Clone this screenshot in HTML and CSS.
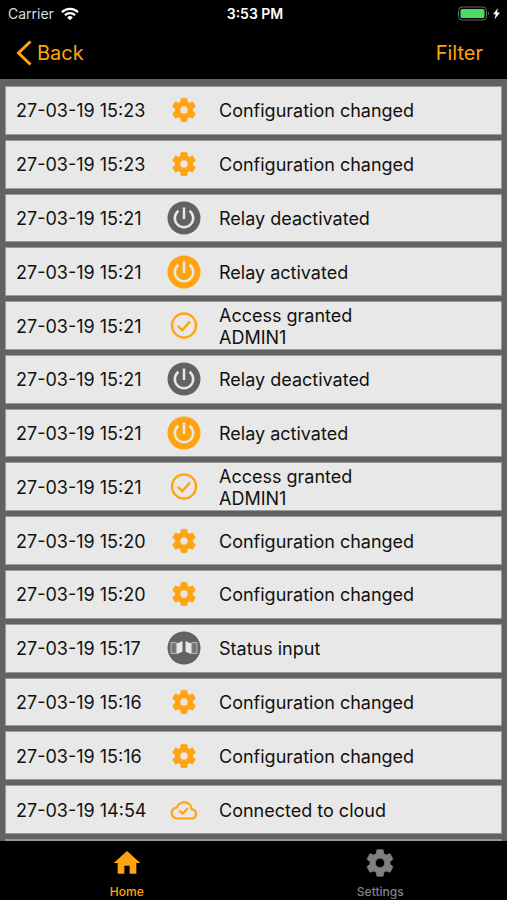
FILE: index.html
```
<!DOCTYPE html>
<html lang="en">
<head>
<meta charset="utf-8">
<meta name="viewport" content="width=device-width, initial-scale=1">
<title>Event log</title>
<link rel="stylesheet" href="styles.css">
</head>
<body>
<svg class="sprite" aria-hidden="true">
  <symbol id="gear" viewBox="0 0 24 24"><path fill="currentColor" stroke="currentColor" stroke-width=".5" stroke-linejoin="round" d="M19.43 12.98c.04-.32.07-.64.07-.98s-.03-.66-.07-.98l2.11-1.65c.19-.15.24-.42.12-.64l-2-3.46c-.12-.22-.39-.3-.61-.22l-2.49 1c-.52-.4-1.08-.73-1.69-.98l-.38-2.65C14.46 2.18 14.25 2 14 2h-4c-.25 0-.46.18-.49.42l-.38 2.65c-.61.25-1.17.59-1.69.98l-2.49-1c-.23-.09-.49 0-.61.22l-2 3.46c-.13.22-.07.49.12.64l2.11 1.65c-.04.32-.07.65-.07.98s.03.66.07.98l-2.11 1.65c-.19.15-.24.42-.12.64l2 3.46c.12.22.39.3.61.22l2.49-1c.52.4 1.08.73 1.69.98l.38 2.65c.03.24.24.42.49.42h4c.25 0 .46-.18.49-.42l.38-2.65c.61-.25 1.17-.59 1.69-.98l2.49 1c.23.09.49 0 .61-.22l2-3.46c.12-.22.07-.49-.12-.64l-2.11-1.65zM12 15.500c-1.930 0-3.500-1.570-3.500-3.500s1.570-3.500 3.500-3.500 3.500 1.570 3.500 3.500-1.570 3.500-3.500 3.500z"/></symbol>
  <symbol id="power" viewBox="0 0 34 34"><circle cx="17" cy="17" r="16.500" fill="currentColor"/><path d="M17 6.500v11.500M11.500 9.700a9.200 9.200 0 1 0 11 0" fill="none" stroke="#e8e8e8" stroke-width="2.500"/></symbol>
  <symbol id="check" viewBox="0 0 34 34"><g fill="none" stroke="currentColor" stroke-width="2.400"><circle cx="17" cy="16.500" r="12"/><path d="M10.800 16.800l4.400 4.400 7.800-8.700"/></g></symbol>
  <symbol id="door" viewBox="0 0 34 34"><circle cx="17" cy="17" r="16.500" fill="currentColor"/><path d="M4 11.500h5.500v11H4zM24.500 11.500H30v11h-5.500z" fill="#777" stroke="#b4b4b4"/><path d="M10 12.500l5.500-2.500v10.500L10 23zM24 12.500l-5.500-2.500v10.500L24 23z" fill="#e8e8e8"/></symbol>
  <symbol id="cloud" viewBox="0 0 34 34"><g fill="none" stroke="currentColor" stroke-width="2.200"><path d="M10.500 25.500a5.600 5.600 0 0 1-.6-11.200 7.800 7.800 0 0 1 15 2 4.650 4.650 0 0 1 .3 9.200z"/><path d="M12.500 17.500l3.200 3.200 5.300-5.700"/></g></symbol>
  <symbol id="home" viewBox="0 0 24 24"><path fill="currentColor" d="M10 20v-6h4v6h5v-8h3L12 3 2 12h3v8z"/></symbol>
</svg>
<div class="app">
  <div class="status">
    <span class="carrier">Carrier
      <svg width="18" height="14" viewBox="0 0 18 14" aria-hidden="true"><g fill="none" stroke="#fff" stroke-width="2.300"><path d="M1 5.200a11.400 11.400 0 0 1 16 0M3.900 8.200a7.300 7.300 0 0 1 10.200 0"/></g><path d="M9 13.300l-2.900-2.900a4.100 4.100 0 0 1 5.800 0z" fill="#fff"/></svg>
    </span>
    <span class="clock">3:53 PM</span>
    <svg class="battery" width="44" height="16" viewBox="0 0 44 16" aria-hidden="true"><rect x="0.500" y="1" width="28" height="13" rx="3.500" fill="none" stroke="#666"/><rect x="2.500" y="3" width="24" height="9" rx="1.500" fill="#4cd964"/><path d="M30 5.500q2 2 0 4z" fill="#666"/><path d="M40 2l-5 6.300h2.700l-1.200 5.200 5.500-7h-3z" fill="#fff"/></svg>
  </div>
  <header class="nav">
    <button type="button" class="navbtn"><svg width="16" height="26" viewBox="0 0 16 26" aria-hidden="true"><path d="M14.500 1.500L2.500 13l12 11.500" fill="none" stroke="currentColor" stroke-width="3"/></svg>Back</button>
    <button type="button" class="navbtn">Filter</button>
  </header>
  <main class="content">
    <ul class="log">
      <li><time>27-03-19 15:23</time><svg class="gear orange"><use href="#gear"/></svg><p>Configuration changed</p></li>
      <li><time>27-03-19 15:23</time><svg class="gear orange"><use href="#gear"/></svg><p>Configuration changed</p></li>
      <li><time>27-03-19 15:21</time><svg class="grey"><use href="#power"/></svg><p>Relay deactivated</p></li>
      <li><time>27-03-19 15:21</time><svg class="orange"><use href="#power"/></svg><p>Relay activated</p></li>
      <li><time>27-03-19 15:21</time><svg class="orange"><use href="#check"/></svg><p>Access granted<br>ADMIN1</p></li>
      <li><time>27-03-19 15:21</time><svg class="grey"><use href="#power"/></svg><p>Relay deactivated</p></li>
      <li><time>27-03-19 15:21</time><svg class="orange"><use href="#power"/></svg><p>Relay activated</p></li>
      <li><time>27-03-19 15:21</time><svg class="orange"><use href="#check"/></svg><p>Access granted<br>ADMIN1</p></li>
      <li><time>27-03-19 15:20</time><svg class="gear orange"><use href="#gear"/></svg><p>Configuration changed</p></li>
      <li><time>27-03-19 15:20</time><svg class="gear orange"><use href="#gear"/></svg><p>Configuration changed</p></li>
      <li><time>27-03-19 15:17</time><svg class="grey"><use href="#door"/></svg><p>Status input</p></li>
      <li><time>27-03-19 15:16</time><svg class="gear orange"><use href="#gear"/></svg><p>Configuration changed</p></li>
      <li><time>27-03-19 15:16</time><svg class="gear orange"><use href="#gear"/></svg><p>Configuration changed</p></li>
      <li><time>27-03-19 14:54</time><svg class="orange"><use href="#cloud"/></svg><p>Connected to cloud</p></li>
      <li class="peek" aria-hidden="true"></li>
    </ul>
  </main>
  <nav class="tabs">
    <a href="#home" class="orange"><svg><use href="#home"/></svg>Home</a>
    <a href="#settings" class="dim"><svg><use href="#gear"/></svg>Settings</a>
  </nav>
</div>
</body>
</html>
```
FILE: styles.css
```
* { box-sizing: border-box; }
body {
  margin: 0;
  background: #000;
  font-family: Inter, "Liberation Sans", sans-serif;
  color: #111;
}
.sprite { position: absolute; width: 0; height: 0; }
.app { min-height: 100vh; display: flex; flex-direction: column; }
.status {
  display: grid;
  grid-template-columns: 1fr auto 1fr;
  align-items: center;
  height: 27px;
  padding: 0 5px 0 8px;
  color: #fff;
  font-size: 14px;
}
.carrier { display: flex; align-items: center; gap: 7px; color: #ddd; }
.clock { font-weight: 600; }
.battery { justify-self: end; }
.nav {
  display: flex;
  justify-content: space-between;
  align-items: center;
  height: 52px;
  padding: 0 24px 0 16px;
}
.navbtn {
  display: flex;
  align-items: center;
  gap: 5px;
  padding: 0;
  border: 0;
  background: none;
  color: #ffa310;
  font: inherit;
  font-size: 20px;
}
.content { flex: 1; display: flex; background: #626262; padding: 7px 5px 0; }
.log {
  flex: 1;
  display: grid;
  grid-template-rows: repeat(14, 1fr) 2px;
  gap: 5px;
  margin: 0;
  padding: 0;
  list-style: none;
}
.log li {
  display: grid;
  grid-template-columns: 151px 34px 1fr;
  align-items: center;
  padding-left: 10px;
  background: #e8e8e8;
  border: 1px solid #999;
  font-size: 18px;
  line-height: 22px;
}
.log time, .log p { padding-top: 2px; }
.log p { margin: 0; padding-left: 18px; }
.log svg { width: 34px; height: 34px; justify-self: center; }
.log .gear { width: 28px; height: 28px; }
.orange { color: #ffa310; }
.grey { color: #626262; }
.dim { color: #808080; }
.tabs { display: flex; height: 59px; }
.tabs a {
  flex: 1;
  display: flex;
  flex-direction: column;
  align-items: center;
  gap: 5px;
  padding-top: 6px;
  text-decoration: none;
  font-size: 12px;
  font-weight: 500;
}
.tabs svg { width: 32px; height: 32px; }
```
